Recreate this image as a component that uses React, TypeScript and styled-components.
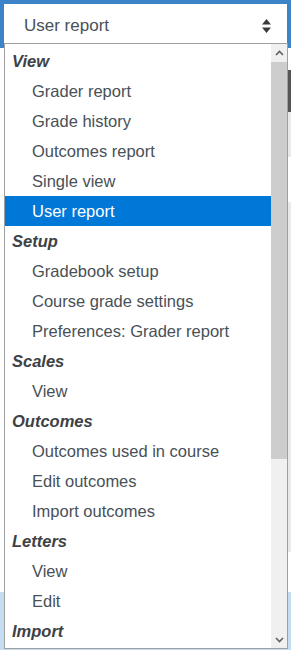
import React from "react";
import styled, { createGlobalStyle } from "styled-components";

const GlobalStyle = createGlobalStyle`
  html, body {
    margin: 0;
    padding: 0;
    background: #ffffff;
  }
  body {
    font-family: "Liberation Sans", Arial, sans-serif;
  }
`;

const Screen = styled.div`
  position: relative;
  width: 291px;
  height: 650px;
  overflow: hidden;
  background: #ffffff;
`;

const SelectBox = styled.div`
  box-sizing: border-box;
  height: 48px;
  width: 291px;
  border: 4px solid #3c83c8;
  background: #ffffff;
  display: flex;
  align-items: center;
  justify-content: space-between;
  padding: 3px 16px 0 20px;
  color: #495057;
  font-size: 17px;
`;

const Backdrop = styled.div`
  display: flex;
  flex-direction: column;
`;

const Band = styled.div<{ $h: number; $bg: string }>`
  height: ${({ $h }) => $h}px;
  margin-left: 240px;
  background: ${({ $bg }) => $bg};
`;

const FooterPanel = styled.div`
  height: 80px;
  background: #c6dcf1;
`;

const Listbox = styled.div`
  position: absolute;
  top: 43px;
  left: 4px;
  width: 284px;
  height: 606px;
  box-sizing: border-box;
  border: 1px solid #a0a0a0;
  background: #ffffff;
  display: flex;
`;

const Options = styled.div`
  flex: 1;
  overflow: hidden;
  padding-top: 2px;
`;

const GroupLabel = styled.div`
  height: 30px;
  line-height: 31px;
  padding-left: 7px;
  font-size: 16.5px;
  font-weight: 700;
  font-style: italic;
  color: #3e4245;
  white-space: nowrap;
`;

const Option = styled.div<{ $selected?: boolean }>`
  height: 30px;
  line-height: 30px;
  padding-left: 27px;
  font-size: 16.5px;
  white-space: nowrap;
  color: ${({ $selected }) => ($selected ? "#ffffff" : "#495057")};
  background: ${({ $selected }) => ($selected ? "#0078d7" : "transparent")};
`;

const Scrollbar = styled.div`
  width: 16px;
  background: #f0f0f0;
  display: flex;
  flex-direction: column;
`;

const ScrollButton = styled.div`
  height: 17px;
  display: flex;
  align-items: center;
  justify-content: center;
  color: #606060;
`;

const Track = styled.div`
  flex: 1;
  display: flex;
  flex-direction: column;
  padding-top: 1px;
`;

const Thumb = styled.div`
  height: 397px;
  background: #cdcdcd;
`;

const Chevron = ({ down }: { down?: boolean }) => (
  <svg width="9" height="6" viewBox="0 0 9 6">
    <path
      d={down ? "M1 1 L4.5 4.5 L8 1" : "M1 5 L4.5 1.5 L8 5"}
      fill="none"
      stroke="currentColor"
      strokeWidth="1.6"
    />
  </svg>
);

const SortIcon = () => (
  <svg width="9" height="14" viewBox="0 0 9 14">
    <path d="M4.5 0 L9 5.5 L0 5.5 Z" fill="#3a3a3a" />
    <path d="M0 8.5 L9 8.5 L4.5 14 Z" fill="#3a3a3a" />
  </svg>
);

type Row = { label: string; group?: boolean; selected?: boolean };

const rows: Row[] = [
  { label: "View", group: true },
  { label: "Grader report" },
  { label: "Grade history" },
  { label: "Outcomes report" },
  { label: "Single view" },
  { label: "User report", selected: true },
  { label: "Setup", group: true },
  { label: "Gradebook setup" },
  { label: "Course grade settings" },
  { label: "Preferences: Grader report" },
  { label: "Scales", group: true },
  { label: "View" },
  { label: "Outcomes", group: true },
  { label: "Outcomes used in course" },
  { label: "Edit outcomes" },
  { label: "Import outcomes" },
  { label: "Letters", group: true },
  { label: "View" },
  { label: "Edit" },
  { label: "Import", group: true },
];

export default function App() {
  return (
    <>
      <GlobalStyle />
      <Screen>
        <SelectBox>
          <span>User report</span>
          <SortIcon />
        </SelectBox>
        <Backdrop>
          <Band $h={22} $bg="#ffffff" />
          <Band $h={42} $bg="#555555" />
          <Band $h={45} $bg="#e9e9e9" />
          <Band $h={45} $bg="#ffffff" />
          <Band $h={350} $bg="#e9e9e9" />
          <Band $h={40} $bg="#ffffff" />
          <FooterPanel />
        </Backdrop>
        <Listbox>
          <Options>
            {rows.map((r, i) =>
              r.group ? (
                <GroupLabel key={i}>{r.label}</GroupLabel>
              ) : (
                <Option key={i} $selected={r.selected}>
                  {r.label}
                </Option>
              )
            )}
          </Options>
          <Scrollbar>
            <ScrollButton>
              <Chevron />
            </ScrollButton>
            <Track>
              <Thumb />
            </Track>
            <ScrollButton>
              <Chevron down />
            </ScrollButton>
          </Scrollbar>
        </Listbox>
      </Screen>
    </>
  );
}
